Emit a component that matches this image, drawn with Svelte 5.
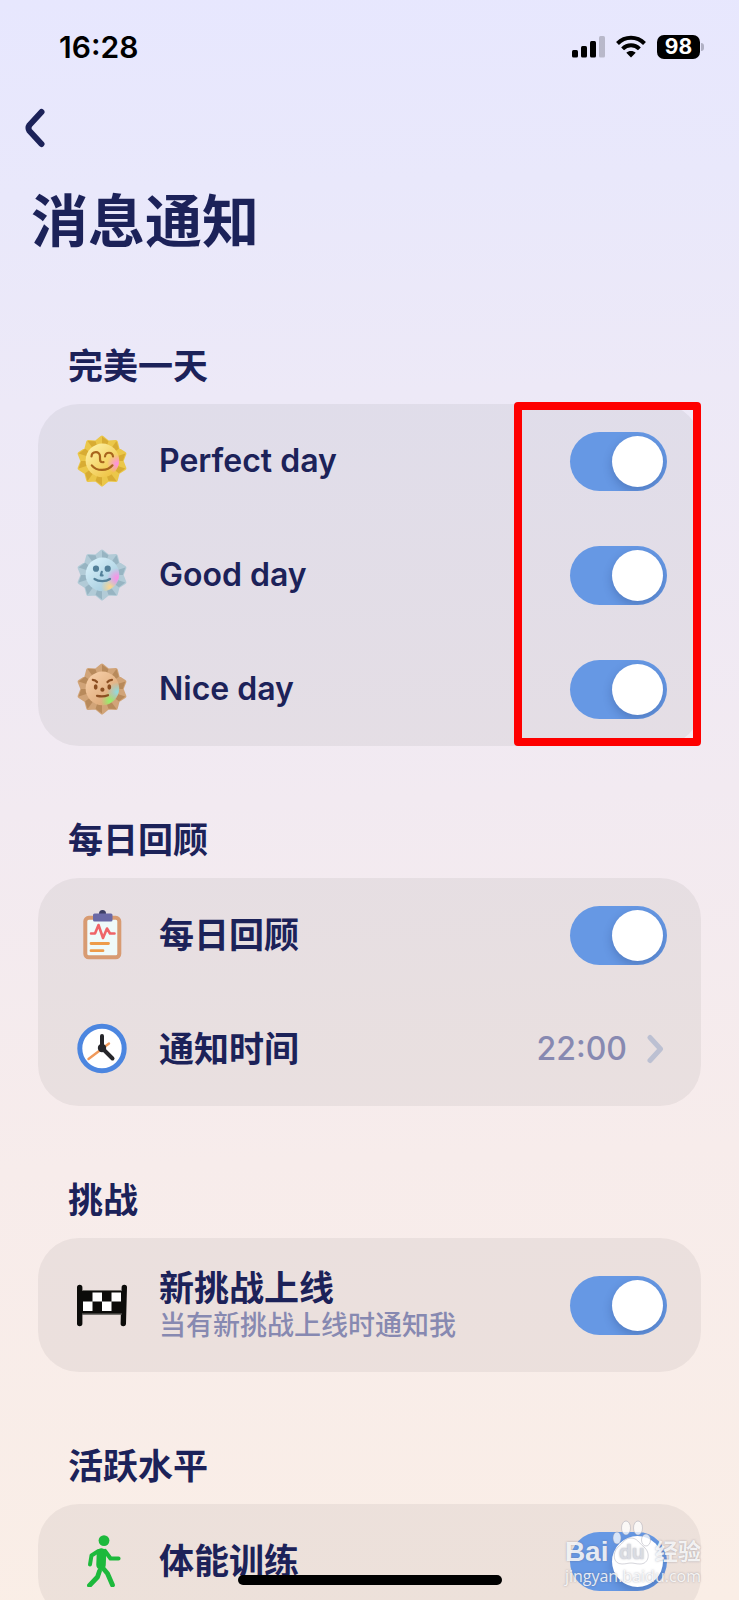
<script lang="ts">
  type IconName = "perfect" | "good" | "nice" | "clipboard" | "clock" | "finish" | "walk";

  interface Row {
    id: string;
    icon: IconName;
    label: string;
    latin?: boolean;
    hint?: string;
    value?: string;
    on?: boolean;
  }

  interface Section {
    title: string;
    marked?: boolean;
    rows: Row[];
  }

  let sections = $state<Section[]>([
    {
      title: "完美一天",
      marked: true,
      rows: [
        { id: "perfect-day", icon: "perfect", label: "Perfect day", latin: true, on: true },
        { id: "good-day", icon: "good", label: "Good day", latin: true, on: true },
        { id: "nice-day", icon: "nice", label: "Nice day", latin: true, on: true },
      ],
    },
    {
      title: "每日回顾",
      rows: [
        { id: "review", icon: "clipboard", label: "每日回顾", on: true },
        { id: "review-time", icon: "clock", label: "通知时间", value: "22:00" },
      ],
    },
    {
      title: "挑战",
      rows: [
        { id: "challenge", icon: "finish", label: "新挑战上线", hint: "当有新挑战上线时通知我", on: true },
      ],
    },
    {
      title: "活跃水平",
      rows: [{ id: "training", icon: "walk", label: "体能训练", on: true }],
    },
  ]);

  const suns = {
    perfect: { light: "#ebc74a", dark: "#d8ac33", top: "#fdf0a4", face: "#efc445", ink: "#a8651d" },
    good: { light: "#b2cbd7", dark: "#97b4c2", top: "#d8f0fa", face: "#a3cbdd", ink: "#54819a" },
    nice: { light: "#d1a478", dark: "#b88a5b", top: "#f6cda6", face: "#dba775", ink: "#8c4f22" },
  };

  function point(step: number, r: number) {
    const a = (step * Math.PI) / 10 - Math.PI / 2;
    return `${(26 + r * Math.cos(a)).toFixed(2)},${(26 + r * Math.sin(a)).toFixed(2)}`;
  }

  const star = Array.from({ length: 20 }, (_, i) => point(i, i % 2 ? 19.5 : 23.5)).join(" ");

  // Each ray has a dark half that starts at its tip
  const facets = Array.from({ length: 10 }, (_, i) => `26,26 ${point(i * 2, 24.6)} ${point(i * 2 + 1, 20.8)}`);
</script>

{#snippet sun(kind: "perfect" | "good" | "nice")}
  {@const c = suns[kind]}
  <svg class="icon" viewBox="0 0 52 52" aria-hidden="true">
    <defs>
      <linearGradient id="face-{kind}" x1="0.1" y1="0.1" x2="0.8" y2="0.9">
        <stop offset="0" stop-color={c.top} />
        <stop offset="1" stop-color={c.face} />
      </linearGradient>
      <radialGradient id="glow-a-{kind}">
        <stop offset="0" stop-color={kind === "nice" ? "#8fdde0" : "#ff8fe6"} />
        <stop offset="1" stop-color={kind === "nice" ? "#8fdde0" : "#ff8fe6"} stop-opacity="0" />
      </radialGradient>
      <radialGradient id="glow-b-{kind}">
        <stop offset="0" stop-color={kind === "nice" ? "#8ff56c" : "#ffd58a"} />
        <stop offset="1" stop-color={kind === "nice" ? "#8ff56c" : "#ffd58a"} stop-opacity="0" />
      </radialGradient>
      <clipPath id="disc-{kind}"><circle cx="26.4" cy="25.4" r="16.8" /></clipPath>
    </defs>
    <polygon points={star} fill={c.light} stroke={c.light} stroke-width="4" stroke-linejoin="round" />
    {#each facets as facet}
      <polygon points={facet} fill={c.dark} />
    {/each}
    <circle cx="26.4" cy="25.4" r="16.8" fill="url(#face-{kind})" />
    <g clip-path="url(#disc-{kind})">
      {#if kind !== "perfect"}
        <circle cx="34" cy="38" r="9" fill="url(#glow-b-{kind})" />
      {/if}
      <circle cx="41" cy="29" r="10" fill="url(#glow-a-{kind})" />
    </g>
    <g fill="none" stroke={c.ink} stroke-width="2.2" stroke-linecap="round" stroke-linejoin="round">
      {#if kind === "perfect"}
        <path d="M15.5 21.5C15.8 16 24 15.5 24 21.5C24 25 23.5 27.6 27.5 27.2" />
        <path d="M29 21.5C29.5 16.5 36.5 16.5 37 21.5" />
        <path d="M15.8 30.3C20.5 36.5 31.5 36.5 36.5 30.3" />
      {:else if kind === "good"}
        <circle cx="20" cy="19.7" r="2" fill={c.ink} />
        <circle cx="31.7" cy="19.7" r="2" fill={c.ink} />
        <path d="M25.8 22.8L24.8 26.4H26.6" />
        <path d="M18.5 30C22.5 32.8 30 32.8 34 30" />
      {:else}
        <path d="M16.8 16.8Q19.5 17 21 19M36 16.8Q33 17 31.5 19" />
        <ellipse cx="19.7" cy="24" rx="0.8" ry="1.6" fill={c.ink} />
        <ellipse cx="33.3" cy="24" rx="0.8" ry="1.6" fill={c.ink} />
        <circle cx="26.4" cy="26.7" r="1" fill={c.ink} />
        <path d="M21 32.8C25 33.6 29 33.4 32 32.2" />
      {/if}
    </g>
  </svg>
{/snippet}

{#snippet icon(name: IconName)}
  {#if name === "perfect" || name === "good" || name === "nice"}
    {@render sun(name)}
  {:else if name === "clipboard"}
    <svg class="icon" viewBox="0 0 52 52" aria-hidden="true">
      <circle cx="26.5" cy="4.5" r="3.5" fill="#3d3f66" />
      <rect x="9.3" y="8.8" width="34" height="39.5" rx="3.5" fill="#effafa" stroke="#d89b72" stroke-width="4" />
      <rect x="17" y="4.5" width="19.5" height="8" rx="1.5" fill="#6a69a6" />
      <path d="M15 24.5H19L22.5 16L27 29L31 19.5L34 24.5H38.5" fill="none" stroke="#ef6468" stroke-width="2.6" stroke-linecap="round" stroke-linejoin="round" />
      <path d="M15 34.5H32.5M15 41.7H27" stroke="#ee9c4a" stroke-width="2.8" stroke-linecap="round" />
    </svg>
  {:else if name === "clock"}
    <svg class="icon" viewBox="0 0 52 52" aria-hidden="true">
      <circle cx="26" cy="25.5" r="22.2" fill="#fff" stroke="#4c86e0" stroke-width="5" />
      <path d="M12.5 36L33 20.5" stroke="#f0995a" stroke-width="2.4" stroke-linecap="round" />
      <path d="M26 25V13M26 25L36.5 35.5" stroke="#26262a" stroke-width="4" stroke-linecap="round" />
      <circle cx="26" cy="25" r="4.2" fill="#26262a" />
    </svg>
  {:else if name === "finish"}
    <svg class="icon" viewBox="0 0 52 52" aria-hidden="true">
      <path d="M3.7 8.5V44.5M48.3 8.5L47.3 44.5" stroke="#0c0c0a" stroke-width="5.4" stroke-linecap="round" />
      <path d="M5 11H47V35.5H5Z" fill="#0c0c0a" />
      <path d="M6 11.5H46M6 35H46" stroke="#6f6c68" stroke-width="1" />
      <path d="M16.5 13.5H26V22.5H16.5ZM35.5 13.5H45V22.5H35.5ZM7 22.5H16.5V32H7ZM26 22.5H35.5V32H26Z" fill="#fff" />
    </svg>
  {:else}
    <svg class="icon" viewBox="0 0 52 52" aria-hidden="true">
      <circle cx="28" cy="5.6" r="5.4" fill="#1db93c" />
      <g fill="none" stroke="#1db93c" stroke-linecap="round" stroke-linejoin="round">
        <path d="M25.5 18L25 30" stroke-width="9.5" />
        <path d="M22.5 16L15.5 20.5L14 29.5" stroke-width="4" />
        <path d="M29 16L34.5 23.5H42.5" stroke-width="4.2" />
        <path d="M26 32L31.5 38.5L36.5 50" stroke-width="4.8" />
        <path d="M23.5 36L21.5 42L13.5 50.5" stroke-width="4.8" />
      </g>
    </svg>
  {/if}
{/snippet}

<div class="screen">
  <header class="status-bar">
    <time>16:28</time>
    <div class="status-icons">
      <svg class="signal" viewBox="0 0 33 24" aria-label="signal">
        <rect x="0" y="15" width="6" height="7.5" rx="1.5" />
        <rect x="9" y="11" width="6" height="11.5" rx="1.5" />
        <rect x="18" y="6" width="6" height="16.5" rx="1.5" />
        <rect x="27" y="1" width="6" height="21.5" rx="1.5" opacity="0.2" />
      </svg>
      <svg class="wifi" viewBox="0 0 30 24" aria-label="wifi">
        <path d="M1.5 8.5C9 0.8 21 0.8 28.5 8.5" />
        <path d="M6.6 13.8C11.4 9 18.6 9 23.4 13.8" />
        <path class="dot" d="M15 22.5L10.3 17.8C12.8 15.3 17.2 15.3 19.7 17.8Z" />
      </svg>
      <div class="battery"><span>98</span></div>
    </div>
  </header>

  <nav>
    <button class="back" aria-label="返回">
      <svg viewBox="0 0 20 40" aria-hidden="true">
        <path d="M16.5 4L4.5 17Q2.5 20 4.5 23L16.5 36" />
      </svg>
    </button>
  </nav>

  <main>
    <h1>消息通知</h1>
    {#each sections as section}
      <section>
        <h2>{section.title}</h2>
        <div class="card">
          {#each section.rows as row}
            <div class="row" class:tall={row.hint}>
              {@render icon(row.icon)}
              <label class="text" for={row.id}>
                <span class="label" class:latin={row.latin}>{row.label}</span>
                {#if row.hint}
                  <span class="hint">{row.hint}</span>
                {/if}
              </label>
              {#if row.value}
                <button class="value" id={row.id}>
                  {row.value}
                  <svg viewBox="0 0 17 30" aria-hidden="true"><path d="M3 3.5L13.5 15L3 26.5" /></svg>
                </button>
              {:else}
                <input class="toggle" type="checkbox" role="switch" id={row.id} bind:checked={row.on} />
              {/if}
            </div>
          {/each}
          {#if section.marked}
            <div class="mark"></div>
          {/if}
        </div>
      </section>
    {/each}
  </main>

  <div class="home-indicator"></div>

  <div class="watermark">
    <div class="brand">
      <span>Bai</span>
      <span class="paw">
        <svg viewBox="0 0 40 46" aria-hidden="true">
          <ellipse cx="5" cy="18" rx="4" ry="6" />
          <ellipse cx="14" cy="8" rx="4.5" ry="7" />
          <ellipse cx="26" cy="8" rx="4.5" ry="7" />
          <ellipse cx="34" cy="20" rx="4.5" ry="6" />
          <path d="M19 18C25 18 27 23 32 27C39 33 37 44 28 44C24 44 22 43 19 43C16 43 14 44 10 44C1 44 0 33 6 27C11 23 13 18 19 18Z" />
        </svg>
        <span class="du">du</span>
      </span>
      <span class="cn">经验</span>
    </div>
    <div class="site">jingyan.baidu.com</div>
  </div>
</div>

<style>
  :global(body) {
    margin: 0;
  }

  .screen {
    position: relative;
    height: 100vh;
    overflow: hidden;
    background: linear-gradient(178deg, #e7e7fe 0%, #e9e8fb 12%, #ede9f7 25%, #f2eaf1 50%, #f7eceb 72%, #faeee6 100%);
    color: #1c2259;
    font-family: Inter, "Noto Sans CJK SC", sans-serif;
  }

  .status-bar {
    display: flex;
    align-items: center;
    justify-content: space-between;
    height: 94px;
    padding: 0 35px 0 59px;
    color: #000;
  }

  time {
    font-size: 30px;
    font-weight: 600;
  }

  .status-icons {
    display: flex;
    align-items: center;
    gap: 11px;
  }

  .signal {
    width: 33px;
    height: 24px;
  }

  .wifi {
    width: 30px;
    height: 24px;
    fill: none;
    stroke: #000;
    stroke-width: 4;
  }

  .wifi .dot {
    fill: #000;
    stroke: none;
  }

  .battery {
    display: flex;
    align-items: center;
    gap: 1px;
  }

  .battery span {
    width: 43px;
    border-radius: 7px;
    background: #000;
    color: #fff;
    font-size: 21px;
    font-weight: 700;
    line-height: 24px;
    text-align: center;
  }

  .battery::after {
    content: "";
    width: 3px;
    height: 8px;
    border-radius: 0 4px 4px 0;
    background: #b0b0c4;
  }

  nav {
    padding-left: 9px;
  }

  button {
    padding: 0;
    border: none;
    background: none;
    font-family: inherit;
    cursor: pointer;
  }

  .back {
    display: flex;
    align-items: center;
    height: 68px;
    padding: 0 16px;
  }

  .back svg {
    width: 20px;
    height: 40px;
    fill: none;
    stroke: #1c2259;
    stroke-width: 6;
    stroke-linecap: round;
  }

  h1 {
    margin: 20px 0 0;
    padding-left: 31px;
    font-size: 57px;
    font-weight: 700;
    line-height: 80px;
  }

  section {
    padding: 74px 38px 0;
  }

  h1 + section {
    padding-top: 84px;
  }

  h2 {
    margin: 0 0 18px;
    padding-left: 30px;
    font-size: 35px;
    font-weight: 700;
    line-height: 40px;
  }

  .card {
    position: relative;
    border-radius: 41px;
    background: rgba(0, 0, 0, 0.05);
  }

  .row {
    display: flex;
    align-items: center;
    height: 114px;
    padding: 0 34px 0 38px;
  }

  .row.tall {
    height: 134px;
  }

  .icon {
    flex: none;
    width: 52px;
    height: 52px;
  }

  .text {
    display: flex;
    flex: 1;
    flex-direction: column;
    padding-left: 31px;
    cursor: pointer;
  }

  .label {
    font-size: 35px;
    font-weight: 700;
    line-height: 42px;
  }

  .label.latin {
    font-size: 32px;
    font-weight: 600;
  }

  .hint {
    color: #8789b1;
    font-size: 27px;
    font-weight: 500;
    line-height: 34px;
  }

  .toggle {
    flex: none;
    width: 97px;
    height: 59px;
    margin: 0;
    padding: 4px;
    box-sizing: border-box;
    border-radius: 30px;
    background: #c9c9d4;
    appearance: none;
    overflow: hidden;
    cursor: pointer;
  }

  .toggle::before {
    content: "";
    display: block;
    width: 51px;
    height: 51px;
    border-radius: 50%;
    background: #fff;
    box-shadow: 0 4px 10px rgba(20, 40, 90, 0.25);
    transition: margin 150ms;
  }

  .toggle:checked {
    background: #6698e4;
  }

  .toggle:checked::before {
    margin-left: 38px;
  }

  .value {
    display: flex;
    align-items: center;
    gap: 20px;
    padding-right: 3px;
    color: #8789b1;
    font-size: 32px;
    font-weight: 500;
    line-height: 42px;
  }

  .value svg {
    width: 17px;
    height: 30px;
    fill: none;
    stroke: #bcc0d2;
    stroke-width: 5;
    stroke-linecap: round;
    stroke-linejoin: round;
  }

  /* Frame over the switches of the first card */
  .mark {
    position: absolute;
    top: -2px;
    right: 0;
    bottom: 0;
    width: 187px;
    box-sizing: border-box;
    border: 8px solid #fe0000;
    border-radius: 4px;
    pointer-events: none;
  }

  .home-indicator {
    position: absolute;
    bottom: 15px;
    left: 50%;
    width: 264px;
    height: 10px;
    border-radius: 5px;
    background: #000;
    transform: translateX(-50%);
  }

  .watermark {
    position: absolute;
    right: 38px;
    bottom: 14px;
    color: rgba(255, 255, 255, 0.85);
    font-family: "Open Sans", "Noto Sans CJK SC", sans-serif;
    text-shadow: 0 0 2px rgba(90, 90, 110, 0.5);
    pointer-events: none;
  }

  .brand {
    display: flex;
    align-items: flex-end;
    justify-content: space-between;
    font-family: "Liberation Sans", "Noto Sans CJK SC", sans-serif;
    font-size: 28px;
    font-weight: 700;
    line-height: 28px;
  }

  .paw {
    display: grid;
    width: 40px;
    height: 46px;
  }

  .paw > * {
    grid-area: 1 / 1;
  }

  .paw svg {
    width: 40px;
    height: 46px;
    fill: rgba(255, 255, 255, 0.75);
    stroke: rgba(150, 150, 165, 0.4);
  }

  .du {
    align-self: end;
    justify-self: center;
    color: #d9dbe2;
    font-size: 21px;
  }

  .cn {
    font-size: 23px;
  }

  .site {
    font-size: 16px;
    line-height: 20px;
  }
</style>
